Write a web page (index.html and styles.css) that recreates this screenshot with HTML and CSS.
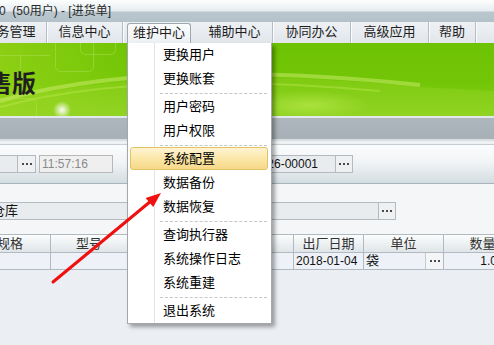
FILE: index.html
```html
<!DOCTYPE html>
<html lang="zh-CN">
<head>
    <meta charset="UTF-8">
    <title>进货单</title>
    <link rel="stylesheet" href="styles.css">
</head>
<body>
    <div class="titlebar"><span class="title">速达V8.0  (50用户) - [进货单]</span></div>

    <div class="menubar">
        <span class="menu-item first">财务管理</span>
        <span class="menu-item">信息中心</span>
        <span class="menu-item active">维护中心</span>
        <span class="menu-item after-active">辅助中心</span>
        <span class="menu-item wide">协同办公</span>
        <span class="menu-item wide">高级应用</span>
        <span class="menu-item small">帮助</span>
        <span class="menu-item">窗口</span>
    </div>

    <div class="banner">
        <svg class="banner-art" viewBox="0 0 494 73" preserveAspectRatio="none">
            <defs>
                <linearGradient id="bgGrad" x1="0" y1="0" x2="0" y2="1">
                    <stop offset="0" stop-color="#6dc303"/>
                    <stop offset="0.55" stop-color="#73c607"/>
                    <stop offset="1" stop-color="#8bd21f"/>
                </linearGradient>
                <linearGradient id="leftGrad" x1="0" y1="0" x2="1" y2="0">
                    <stop offset="0" stop-color="#a4d820" stop-opacity="0.55"/>
                    <stop offset="0.3" stop-color="#a4d820" stop-opacity="0"/>
                </linearGradient>
                <radialGradient id="glow">
                    <stop offset="0" stop-color="#ffffff" stop-opacity="0.95"/>
                    <stop offset="1" stop-color="#ffffff" stop-opacity="0"/>
                </radialGradient>
                <radialGradient id="softGlow">
                    <stop offset="0" stop-color="#b8e84a" stop-opacity="0.7"/>
                    <stop offset="1" stop-color="#b8e84a" stop-opacity="0"/>
                </radialGradient>
            </defs>
            <rect width="494" height="73" fill="url(#bgGrad)"/>
            <rect width="494" height="73" fill="url(#leftGrad)"/>
            <!-- light area under the swoosh -->
            <path d="M0 60 Q 150 18 420 44 L 494 48 L 494 73 L 0 73 Z" fill="#9ad82c" opacity="0.35"/>
            <path d="M0 58 Q 150 14 420 42" fill="none" stroke="#d8f27a" stroke-width="4" opacity="0.45"/>
            <path d="M0 64 Q 140 26 380 48" fill="none" stroke="#c9ee5c" stroke-width="2" opacity="0.35"/>
            <ellipse cx="310" cy="62" rx="60" ry="14" fill="url(#softGlow)"/>
            <!-- outline boxes -->
            <g fill="none" stroke="#b2e25a" stroke-opacity="0.45" stroke-width="1">
                <rect x="55.5" y="-4.5" width="38" height="33" rx="5"/>
                <rect x="80.5" y="-10.5" width="35" height="22" rx="5"/>
                <rect x="-10.5" y="55.5" width="47" height="30" rx="5"/>
                <path d="M0 12.5 H50 M20.5 12 V36"/>
            </g>
            <circle cx="62" cy="67" r="9" fill="url(#glow)"/>
        </svg>
        <span class="brand">销售版</span>
    </div>

    <div class="band"></div>

    <div class="form">
        <div class="toolbar">
            <span class="field date-field">2018-01-26</span>
            <span class="dots-btn"></span>
            <span class="field time-field">11:57:16</span>
            <span class="field number-field">JH-20180126-00001</span>
            <span class="dots-btn narrow"></span>
        </div>

        <div class="store-row">
            <span class="field store-field">仓库</span>
            <span class="dots-btn narrow"></span>
        </div>

        <div class="grid">
            <div class="grid-row grid-head">
                <span class="cell">规格</span>
                <span class="cell">型号</span>
                <span class="cell">颜色</span>
                <span class="cell">批号</span>
                <span class="cell">出厂日期</span>
                <span class="cell">单位</span>
                <span class="cell">数量</span>
            </div>
            <div class="grid-row grid-data">
                <span class="cell"></span>
                <span class="cell"></span>
                <span class="cell"></span>
                <span class="cell"></span>
                <span class="cell">2018-01-04</span>
                <span class="cell unit-cell">袋<span class="dots-btn cell-btn"></span></span>
                <span class="cell num">1.0000</span>
            </div>
        </div>
    </div>

    <div class="dropdown">
        <div class="drop-item">更换用户</div>
        <div class="drop-item">更换账套</div>
        <div class="drop-sep"></div>
        <div class="drop-item">用户密码</div>
        <div class="drop-item">用户权限</div>
        <div class="drop-sep"></div>
        <div class="drop-item hover">系统配置</div>
        <div class="drop-item">数据备份</div>
        <div class="drop-item">数据恢复</div>
        <div class="drop-sep"></div>
        <div class="drop-item">查询执行器</div>
        <div class="drop-item">系统操作日志</div>
        <div class="drop-item">系统重建</div>
        <div class="drop-sep"></div>
        <div class="drop-item">退出系统</div>
    </div>

    <!-- annotation arrow -->
    <svg class="arrow" viewBox="0 0 494 345">
        <line x1="53" y1="282" x2="151" y2="201" stroke="#f01010" stroke-width="3" stroke-linecap="round"/>
        <polygon points="161,193 145.6,197.9 153.2,207.1" fill="#f01010"/>
    </svg>
</body>
</html>
```

FILE: styles.css
```css
* {
    box-sizing: border-box;
}
html, body {
    margin: 0;
    padding: 0;
}
body {
    position: relative;
    width: 494px;
    height: 345px;
    overflow: hidden;
    font-family: "Liberation Sans", "Noto Sans CJK SC", sans-serif;
    font-size: 13px;
    color: #111;
    background: #ebeef2;
}

/* title bar */
.titlebar {
    height: 22px;
    overflow: hidden;
    white-space: pre;
    background: linear-gradient(#fdfefe, #e6ecef 11px, #bac7ce 12px, #b3c1c8 22px);
}
.title {
    display: block;
    margin-left: -43px;
    font-size: 12px;
    line-height: 22px;
    color: #2a2a2a;
}

/* menu bar */
.menubar {
    display: flex;
    height: 21px;
    overflow: hidden;
    white-space: nowrap;
    background: linear-gradient(#eef1f4, #e2e6eb);
}
.menu-item {
    flex: none;
    width: 76px;
    line-height: 20px;
    text-align: center;
    color: #1e1e1e;
    border-right: 1px solid #b4bcc4;
    box-shadow: 1px 0 #fbfcfd;
}
.menu-item.first {
    width: 74px;
    margin-left: -27px;
}
.menu-item.active {
    width: 64px;
    height: 20px;
    margin: 1px 0 0 4px;
    line-height: 18px;
    border: 1px solid #9fa8b0;
    border-bottom: none;
    border-radius: 3px 3px 0 0;
    background: linear-gradient(#fbfcfc, #eef1f3);
    box-shadow: none;
}
.menu-item.after-active {
    margin-left: 6px;
}
.menu-item.wide {
    width: 78px;
}
.menu-item.small {
    width: 47px;
}

/* green banner */
.banner {
    display: grid;
    height: 73px;
    overflow: hidden;
}
.banner > * {
    grid-area: 1 / 1;
}
.banner-art {
    display: block;
    width: 494px;
    height: 73px;
}
.brand {
    align-self: start;
    justify-self: start;
    margin: 29px 0 0 -36px;
    font-size: 24px;
    font-weight: bold;
    line-height: 24px;
    color: #1f1f1f;
    white-space: nowrap;
}

.band {
    height: 25px;
    background: linear-gradient(#e2e8eb 0, #e2e8eb 2px, #adb7bd 2px, #a6b0b6 23px, #d9dee1 23px);
}

/* form area */
.form {
    padding-top: 3px;
    background: linear-gradient(#eef1f3 0, #eef1f3 3px, #f4f6f8 3px);
}
.toolbar {
    display: flex;
    height: 40px;
    padding-top: 10px;
    border-top: 1px solid #c6ced3;
    border-bottom: 1px solid #a8b4ba;
    background: linear-gradient(#fbfcfd, #f1f4f6 45%, #d3dde1);
    white-space: nowrap;
}
.field {
    flex: none;
    height: 18px;
    padding: 0 2px;
    overflow: hidden;
    font-size: 12px;
    line-height: 16px;
    border: 1px solid #b3bac0;
    background: #e9ecef;
}
.date-field {
    width: 87px;
    margin-left: -69px;
}
.time-field {
    width: 74px;
    margin-left: 3px;
    color: #8a8a8a;
    background: #efefef;
    border-color: #b8b8b8;
}
.number-field {
    width: 133px;
    margin-left: 90px;
    padding-right: 17px;
    text-align: right;
}
.dots-btn {
    flex: none;
    display: flex;
    align-items: center;
    justify-content: center;
    width: 18px;
    height: 18px;
    border: 1px solid #b3bac0;
    border-left: none;
    background: #eef0f2;
}
.dots-btn.narrow {
    width: 17px;
}
.dots-btn::before {
    content: "";
    width: 10px;
    height: 2px;
    background: linear-gradient(to right, #4a4a4a 2px, transparent 2px) 0 0 / 4px 2px repeat-x;
}

.store-row {
    display: flex;
    padding: 18px 0 14px;
}
.store-field {
    width: 391px;
    margin-left: -12px;
    padding-left: 3px;
    font-size: 13px;
    line-height: 16px;
    color: #111;
}

/* detail grid */
.grid {
    width: 552px;
    margin-left: -30px;
}
.grid-row {
    display: grid;
    grid-template-columns: 81px 77px 80px 86px 70px 80px 78px;
}
.cell {
    overflow: hidden;
    white-space: nowrap;
    border-right: 1px solid #b0bac0;
}
.grid-head {
    height: 19px;
    border-top: 1px solid #b0bac0;
    border-bottom: 1px solid #b0bac0;
    background: linear-gradient(#fcfdfd, #dfe5e8);
}
.grid-head .cell {
    text-align: center;
    line-height: 17px;
    color: #333;
}
.grid-data {
    height: 17px;
    border-bottom: 1px solid #b0bac0;
    background: #eef2f8;
}
.grid-data .cell {
    padding-left: 2px;
    font-size: 12px;
    line-height: 16px;
}
.unit-cell {
    display: flex;
    justify-content: space-between;
    font-size: 13px !important;
}
.cell-btn {
    width: 18px;
    height: 16px;
    border: none;
    border-left: 1px solid #c4cbd0;
    background: #f3f5f7;
}
.grid-data .num {
    text-align: right;
    padding-right: 4px;
}

/* open menu */
.dropdown {
    position: absolute;
    left: 127px;
    top: 43px;
    width: 145px;
    border: 1px solid #a3a8ad;
    border-top: none;
    background: linear-gradient(to right, #fff 26px, #e3e3e3 26px, #e3e3e3 27px, #fff 27px);
    box-shadow: 3px 3px 4px rgba(0, 0, 0, 0.35);
}
.drop-item {
    height: 24px;
    margin: 0 3px 0 2px;
    padding-left: 32px;
    line-height: 22px;
    border: 1px solid transparent;
    color: #000;
    white-space: nowrap;
}
.drop-item.hover {
    height: 23px;
    margin-bottom: 1px;
    border-color: #e2c262;
    border-radius: 3px;
    background: linear-gradient(#fff4d2, #fbe7a8 50%, #f6d889);
}
.drop-sep {
    height: 1px;
    margin: 2px 4px 1px 32px;
    border-top: 1px dashed #c6c6c6;
}

.arrow {
    position: absolute;
    left: 0;
    top: 0;
    width: 494px;
    height: 345px;
    pointer-events: none;
}
```
